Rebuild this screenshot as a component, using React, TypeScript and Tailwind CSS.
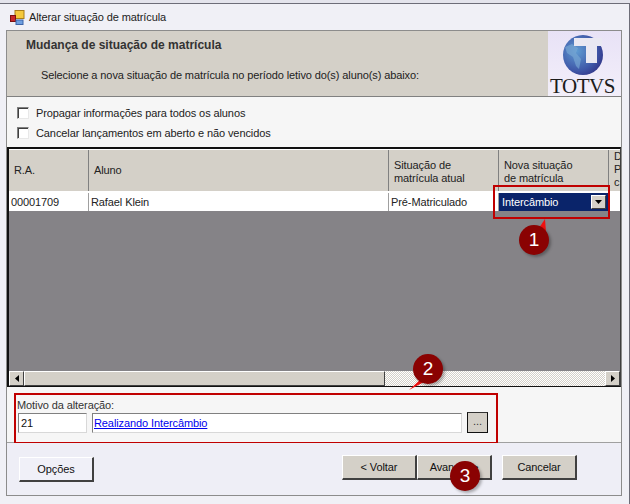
import React from "react";

const font = { fontFamily: '"Liberation Sans", sans-serif' };

function Marker({ n, className }: { n: string; className: string }) {
  return (
    <div
      className={`absolute w-[30px] h-[30px] rounded-full bg-[#8a0202] text-white text-[19px] leading-[29px] tracking-normal text-center shadow-[2px_2px_3px_rgba(0,0,0,0.3)] ${className}`}
    >
      {n}
    </div>
  );
}

function Check({ label }: { label: string }) {
  return (
    <div className="flex items-center h-5 gap-[7px]">
      <div className="w-3 h-3 bg-white border border-[#808080] border-r-[#e8e8e8] border-b-[#e8e8e8] shadow-[inset_1px_1px_0_#404040]" />
      <span className="text-[11px] text-[#222]">{label}</span>
    </div>
  );
}

function WizardButton({ label, className }: { label: string; className: string }) {
  return (
    <button
      className={`h-[25px] w-[75px] text-[11px] text-[#111] border-t border-l border-white border-r-2 border-b-2 border-r-[#404040] border-b-[#404040] ${className}`}
    >
      {label}
    </button>
  );
}

function Logo() {
  return (
    <div className="w-[73px] h-[65px] pr-[4px] bg-gradient-to-b from-[#e8e2f6] to-[#f3effa] flex flex-col items-center overflow-hidden">
      <svg width="42" height="42" viewBox="0 0 42 42" className="mt-[3px] shrink-0">
        <defs>
          <radialGradient id="g" cx="0.35" cy="0.4" r="0.7">
            <stop offset="0" stopColor="#5f9bd2" />
            <stop offset="0.7" stopColor="#3f58a8" />
            <stop offset="1" stopColor="#33378a" />
          </radialGradient>
        </defs>
        <circle cx="21" cy="21" r="20" fill="url(#g)" />
        <path d="M3 13 L10 10 L16 14 L14 19 L19 25 L17 35 L14 32 L11 23 L5 19 Z" fill="#79a9d4" opacity="0.65" />
        <path d="M12 4 H40 V12 H35 V29 H24 V12 H12 Z" fill="#e9e8f2" />
      </svg>
      <span
        className="text-[21px] leading-[20px] text-[#1c1c1c] tracking-[-0.5px]"
        style={{ fontFamily: '"Liberation Serif", serif' }}
      >
        TOTVS
      </span>
    </div>
  );
}

function ScrollBtn({ dir }: { dir: "left" | "right" }) {
  return (
    <div className="w-[15px] bg-[#d4d0c8] border-t border-l border-white border-r border-b border-r-[#404040] border-b-[#404040] flex items-center justify-center">
      <svg width="4" height="7" viewBox="0 0 4 7">
        <path d={dir === "left" ? "M4 0V7L0 3.5Z" : "M0 0V7L4 3.5Z"} fill="#000" />
      </svg>
    </div>
  );
}

export default function App() {
  return (
    <div className="w-[630px] h-[504px] overflow-hidden relative bg-[#e4e4ec] pt-[3px] tracking-[-0.1px]" style={font}>
      <div className="h-[501px] border-t border-[#6d6d78] border-r border-r-[#6d6d78] bg-[#f0f0f6] flex flex-col">
        {/* title bar */}
        <div className="h-[26px] shrink-0 flex items-center pl-[10px] gap-[4px] bg-[#f0f0f6]">
          <svg width="15" height="15" viewBox="0 0 15 15">
            <rect x="5" y="0.5" width="9" height="8" fill="#f4c93c" stroke="#a87d18" />
            <rect x="0.5" y="5.5" width="5" height="6" fill="#c8282a" stroke="#7a1010" />
            <rect x="6" y="10" width="7" height="4.5" fill="#6f9fe0" stroke="#3d64a8" />
          </svg>
          <span className="text-[11px] text-[#222]">Alterar situação de matrícula</span>
        </div>

        {/* dialog body */}
        <div className="ml-[6px] mr-[7px] h-[466px] border border-[#8c8c8c] flex flex-col bg-[#f6f6f6]">
          <div className="h-[66px] shrink-0 bg-[#d4d0c8] border-b border-[#808080] flex justify-between">
            <div className="pl-[19px] pt-[5px]">
              <div className="text-[12px] font-bold tracking-normal text-[#333] h-[18px]">Mudança de situação de matrícula</div>
              <div className="text-[11px] text-[#222] pl-[15px] pt-[13px]">
                Selecione a nova situação de matrícula no período letivo do(s) aluno(s) abaixo:
              </div>
            </div>
            <Logo />
          </div>

          <div className="pl-[10px] pt-[6px] h-[50px] shrink-0">
            <Check label="Propagar informações para todos os alunos" />
            <Check label="Cancelar lançamentos em aberto e não vencidos" />
          </div>

          {/* grid */}
          <div className="h-[240px] shrink-0 border-2 border-[#111] border-r border-r-[#404040] border-b border-b-[#111] flex flex-col overflow-hidden bg-[#858387]">
            <div className="h-[44px] shrink-0 flex bg-[#d4d0c8] border-t border-t-white border-b-2 border-white text-[11px] leading-[13px] text-[#222]">
              <div className="w-[80px] pl-[5px] flex items-center border-r border-[#808080]">R.A.</div>
              <div className="w-[300px] pl-[5px] flex items-center border-r border-[#808080]">Aluno</div>
              <div className="w-[110px] pl-[5px] pt-[2px] flex items-center border-r border-[#808080]">
                <div>Situação de<br />matrícula atual</div>
              </div>
              <div className="w-[110px] pl-[5px] pt-[2px] flex items-center border-r border-[#808080]">
                <div>Nova situação<br />de matrícula</div>
              </div>
              <div className="flex-1 pl-[5px] overflow-hidden whitespace-nowrap">D<br />P<br />c</div>
            </div>
            <div className="h-[18px] shrink-0 flex bg-white text-[11px] leading-[18px] text-[#222]">
              <div className="w-[80px] pl-[2px] border-r border-[#a0a0a0]">00001709</div>
              <div className="w-[300px] pl-[2px] border-r border-[#a0a0a0]">Rafael Klein</div>
              <div className="w-[110px] pl-[2px] border-r border-[#a0a0a0]">Pré-Matriculado</div>
              <div className="w-[110px] pl-[3px] pr-[3px] bg-[#0a246a] text-white flex items-center justify-between">
                <span>Intercâmbio</span>
                <div className="w-[15px] h-[14px] bg-[#d4d0c8] border-t border-l border-white border-r border-b border-r-[#404040] border-b-[#404040] flex items-center justify-center">
                  <svg width="7" height="4" viewBox="0 0 7 4"><path d="M0 0H7L3.5 4Z" fill="#000" /></svg>
                </div>
              </div>
              <div className="flex-1" />
            </div>
            <div className="flex-1" />
            {/* scrollbar */}
            <div className="h-[15px] shrink-0 flex bg-[repeating-conic-gradient(#d4d0c8_0_25%,#fff_0_50%)] bg-[length:2px_2px]">
              <ScrollBtn dir="left" />
              <div className="w-[361px] bg-[#d4d0c8] border-t border-l border-white border-r border-b border-r-[#404040] border-b-[#404040]" />
              <div className="flex-1" />
              <ScrollBtn dir="right" />
            </div>
          </div>

          {/* motivo */}
          <div className="flex-1 flex flex-col">
            <div className="h-[56px] shrink-0 pl-[7px] pt-[6px] border-b border-[#a0a0a0]">
              <div className="w-[484px] h-[51px] border-2 border-[#c00000] pl-[2px] pt-[4px]">
                <div className="text-[11px] leading-[12px] text-[#333] -ml-px">Motivo da alteração:</div>
                <div className="flex items-center mt-[1px]">
                  <div className="w-[69px] h-[20px] bg-white border border-[#808080] border-r-[#d8d8d8] border-b-[#d8d8d8] pl-[2px] text-[11px] leading-[18px] text-[#111]">21</div>
                  <div className="ml-[5px] w-[370px] h-[20px] bg-white border border-[#808080] border-r-[#d8d8d8] border-b-[#d8d8d8] pl-[1px] text-[11px] leading-[18px] text-[#0000ee] underline">Realizando Intercâmbio</div>
                  <div className="ml-[5px] w-[21px] h-[21px] bg-[#d4d0c8] border border-[#111] border-t-[#333] text-[11px] leading-[17px] text-center text-[#333]">...</div>
                </div>
              </div>
            </div>
            <div className="flex-1 bg-[#eeeef6] flex justify-between pl-[12px] pr-[44px] pt-[12px]">
              <WizardButton label="Opções" className="bg-[#f0f0f8] mt-[2px] h-[23px]" />
              <div className="flex">
                <WizardButton label="< Voltar" className="bg-[#d4d0c8]" />
                <WizardButton label="Avançar >" className="bg-[#d4d0c8]" />
                <WizardButton label="Cancelar" className="bg-[#d4d0c8] ml-[10px]" />
              </div>
            </div>
          </div>
        </div>
      </div>

      {/* annotations */}
      <div className="absolute left-[493px] top-[185px] w-[117px] h-[34px] border-2 border-[#c00000]" />
      <svg width="630" height="504" className="absolute left-0 top-0 pointer-events-none">
        <path d="M537 231 L545 219 L546 232 Z" fill="#f01010" />
        <path d="M409 390 L421 379 L424 382 Z" fill="#f01010" />
      </svg>
      <Marker n="1" className="left-[519px] top-[225px]" />
      <Marker n="2" className="left-[413px] top-[354px]" />
      <Marker n="3" className="left-[450px] top-[461px]" />
    </div>
  );
}
